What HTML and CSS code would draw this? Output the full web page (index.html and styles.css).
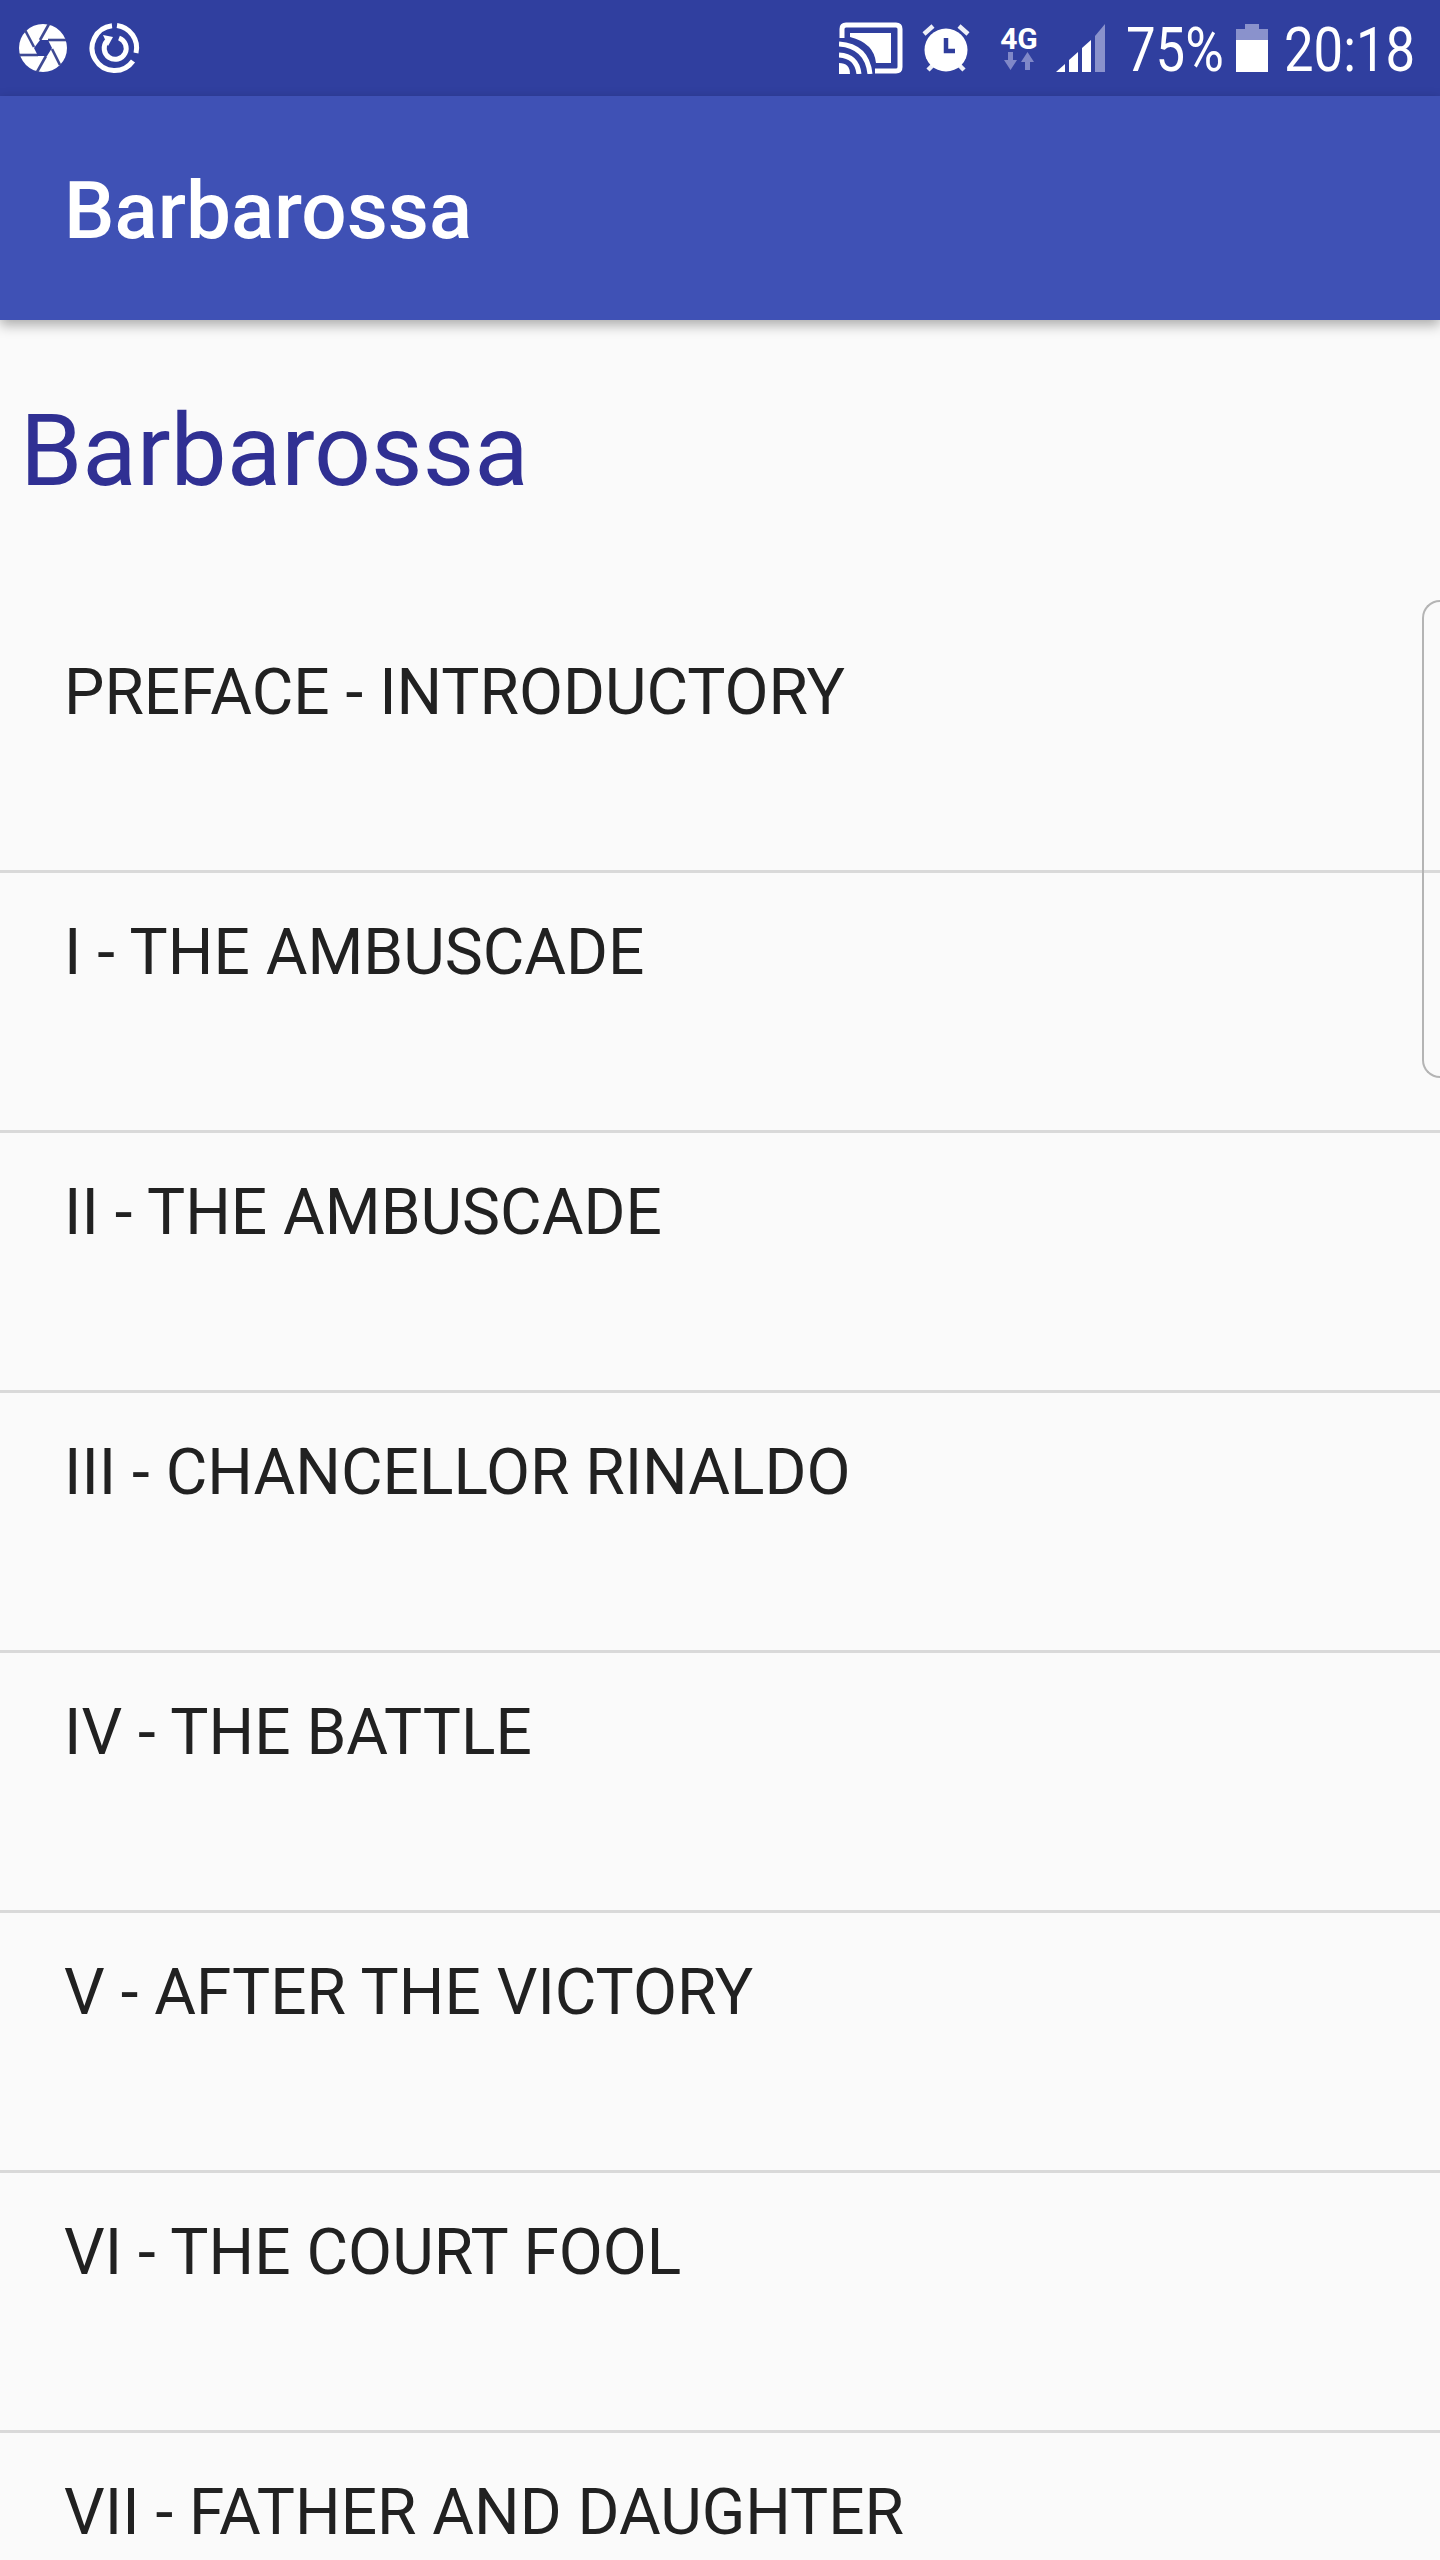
FILE: index.html
```html
<!DOCTYPE html>
<html lang="en">
<head>
    <meta charset="UTF-8">
    <meta name="viewport" content="width=device-width, initial-scale=1.0">
    <title>Barbarossa</title>
    <link rel="stylesheet" href="styles.css">
</head>
<body>
    <div class="phone">
        <div class="status-bar">
            <div class="status-left">
                <!-- aperture -->
                <svg class="icon-aperture" width="50" height="50" viewBox="0 0 50 50">
                    <circle cx="25" cy="25" r="24" fill="#fff"/>
                    <g stroke="#3f4a94" stroke-width="2.600" fill="none">
                        <path d="M31 1 L22 17"/>
                        <path d="M48 17 L30 17"/>
                        <path d="M42 42 L34 26"/>
                        <path d="M19 49 L28 33"/>
                        <path d="M1 32 L20 32"/>
                        <path d="M7 7 L16 24"/>
                    </g>
                    <path d="M22 17 H30 L34 25 L29 33 H20 L16 25 Z" fill="#2f3d9c"/>
                </svg>
                <!-- sync ring -->
                <svg class="icon-ring" width="52" height="52" viewBox="0 0 52 52">
                    <g fill="none" stroke="#fff" stroke-width="5">
                        <path d="M28 3.500 A22.500 22.500 0 0 1 47 31"/>
                        <path d="M44 39 A22.500 22.500 0 1 1 23 3.700"/>
                        <path d="M18 19 A11 11 0 1 0 30 16"/>
                    </g>
                    <path d="M14 13 L24 15 L19 24 Z" fill="#fff"/>
                </svg>
            </div>
            <div class="status-right">
                <!-- cast -->
                <svg class="icon-cast" width="64" height="52" viewBox="0 0 64 52">
                    <path d="M3 16 V7 Q3 3 7 3 H57 Q61 3 61 7 V45 Q61 49 57 49 H36" fill="none" stroke="#fff" stroke-width="5"/>
                    <path d="M11 11 H52 V41 H37 Q35 21 11 15 Z" fill="#fff"/>
                    <g fill="none" stroke="#fff" stroke-width="5">
                        <path d="M0 22 Q28 24 31 52"/>
                        <path d="M0 33 Q18 34 20 52"/>
                    </g>
                    <path d="M0 41 Q11 41 11 52 H0 Z" fill="#fff"/>
                </svg>
                <!-- alarm -->
                <svg class="icon-alarm" width="48" height="48" viewBox="0 0 48 48">
                    <circle cx="24" cy="26" r="21.500" fill="#fff"/>
                    <path d="M2 10 L11 2 M46 10 L37 2 M6 46 L11 41 M42 46 L37 41" stroke="#fff" stroke-width="4.500" fill="none" opacity="0.92"/>
                    <path d="M24 14 V27 H33" stroke="#2f3d9c" stroke-width="4.500" fill="none"/>
                </svg>
                <!-- 4G -->
                <div class="net">
                    <span class="net-label">4G</span>
                    <svg width="30" height="18" viewBox="0 0 30 18">
                        <path d="M4 0 H9 V8 H13 L6.500 18 L0 8 H4 Z M21 18 H26 V10 H30 L23.500 0 L17 10 H21 Z" fill="#8088c8"/>
                    </svg>
                </div>
                <!-- signal -->
                <svg class="icon-signal" width="50" height="48" viewBox="0 0 50 48">
                    <path d="M0 48 L9 40 V48 Z M13 48 V36 L22 28 V48 Z M26 48 V24 L35 16 V48 Z" fill="#fff"/>
                    <path d="M39 48 V12 L49 0 V48 Z" fill="#8a92cc"/>
                </svg>
                <span class="status-text percent">75%</span>
                <!-- battery -->
                <svg class="icon-battery" width="32" height="48" viewBox="0 0 32 48">
                    <path d="M9 0 H23 V5 H32 V16 H0 V5 H9 Z" fill="#8a92cc"/>
                    <rect x="0" y="16" width="32" height="32" fill="#fff"/>
                </svg>
                <span class="status-text clock">20:18</span>
            </div>
        </div>

        <header class="app-bar">Barbarossa</header>

        <main>
            <h1 class="book-title">Barbarossa</h1>
            <ul class="chapters">
                <li>PREFACE - INTRODUCTORY</li>
                <li>I - THE AMBUSCADE</li>
                <li>II - THE AMBUSCADE</li>
                <li>III - CHANCELLOR RINALDO</li>
                <li>IV - THE BATTLE</li>
                <li>V - AFTER THE VICTORY</li>
                <li>VI - THE COURT FOOL</li>
                <li>VII - FATHER AND DAUGHTER</li>
            </ul>
        </main>

        <div class="edge-handle"></div>
    </div>
</body>
</html>
```
FILE: styles.css
```css
* {
    box-sizing: border-box;
}
html, body {
    margin: 0;
    padding: 0;
}
body {
    font-family: Roboto, "Noto Sans", sans-serif;
    background-color: #fafafa;
    color: #212121;
}
.phone {
    position: relative;
    width: 1440px;
    height: 2560px;
    overflow: hidden;
}
.status-bar {
    display: flex;
    justify-content: space-between;
    align-items: center;
    height: 96px;
    padding: 0 24px 0 18px;
    background-color: #303f9f;
}
.status-left {
    display: flex;
    align-items: center;
    gap: 21px;
}
.status-right {
    display: flex;
    align-items: center;
}
.icon-cast {
    margin-right: 19px;
}
.icon-alarm {
    margin-right: 30px;
}
.net {
    display: flex;
    flex-direction: column;
    align-items: center;
    width: 38px;
    margin-right: 18px;
}
.net-label {
    font-size: 30px;
    line-height: 26px;
    font-weight: 700;
    color: #fff;
}
.status-text {
    display: inline-block;
    padding-top: 4px;
    font-size: 62px;
    line-height: 60px;
    color: #fff;
    transform: scaleX(0.85);
    transform-origin: left center;
}
.percent {
    width: 96px;
    margin-left: 20px;
    margin-right: 14px;
}
.clock {
    width: 130px;
    margin-left: 16px;
    margin-right: 2px;
}
.app-bar {
    position: relative;
    z-index: 1;
    height: 224px;
    padding: 3px 64px 0;
    line-height: 224px;
    font-size: 80px;
    font-weight: 500;
    color: #fff;
    background-color: #3f51b5;
    box-shadow: 0 5px 12px rgba(0, 0, 0, 0.32);
}
.book-title {
    height: 293px;
    margin: 0;
    padding: 71px 0 0 20px;
    font-size: 100px;
    line-height: 120px;
    font-weight: 400;
    color: #303093;
}
.chapters {
    margin: 0;
    padding: 0;
    list-style: none;
}
.chapters li {
    height: 260px;
    padding: 44px 64px 0;
    font-size: 64px;
    line-height: 72px;
    color: #212121;
    border-bottom: 3px solid #d9d9d9;
}
.edge-handle {
    position: absolute;
    top: 600px;
    right: 0;
    width: 18px;
    height: 478px;
    border: 2px solid #b4b4b4;
    border-right: none;
    border-radius: 18px 0 0 18px;
}
```
